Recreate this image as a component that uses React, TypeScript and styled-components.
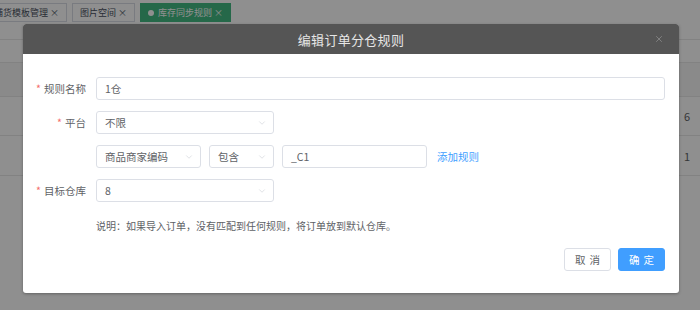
import React from 'react';
import styled, { createGlobalStyle } from 'styled-components';
import { X, ChevronDown } from 'lucide-react';

const GlobalStyle = createGlobalStyle`
  html, body {
    margin: 0;
    padding: 0;
    font-family: 'Noto Sans CJK SC', 'Liberation Sans', sans-serif;
  }
`;

/* ---------- page behind the dialog ---------- */

const Page = styled.div`
  position: relative;
  width: 700px;
  height: 310px;
  overflow: hidden;
  background: #ffffff;
`;

const TabBar = styled.div`
  display: flex;
  align-items: flex-start;
  gap: 5px;
  height: 27px;
  padding-top: 3px;
  margin-left: -14px;
  box-sizing: border-box;
`;

const Tab = styled.div<{ $active?: boolean }>`
  display: flex;
  align-items: center;
  gap: 4px;
  height: 19px;
  padding: 0 7px;
  box-sizing: border-box;
  border: 1px solid ${(p) => (p.$active ? '#42b983' : '#d8dce5')};
  background: ${(p) => (p.$active ? '#42b983' : '#ffffff')};
  color: ${(p) => (p.$active ? '#ffffff' : '#495060')};
  font-size: 9px;
  white-space: nowrap;
`;

const TabDot = styled.span`
  width: 6px;
  height: 6px;
  border-radius: 50%;
  background: #ffffff;
`;

const Table = styled.div`
  margin-top: 12px;
  border-top: 1px solid #e8e8e8;
`;

const Row = styled.div<{ $h: number; $head?: boolean }>`
  display: flex;
  justify-content: flex-end;
  align-items: center;
  height: ${(p) => p.$h}px;
  box-sizing: border-box;
  border-bottom: 1px solid #e8e8e8;
  background: ${(p) => (p.$head ? '#f7f7f7' : '#ffffff')};
  font-size: 11px;
  color: #606266;
`;

const NumCell = styled.span`
  width: 16px;
`;

/* ---------- dialog ---------- */

const Overlay = styled.div`
  position: absolute;
  inset: 0;
  background: rgba(0, 0, 0, 0.44);
  padding: 24px 0 0 23px;
  box-sizing: border-box;
`;

const Dialog = styled.div`
  width: 656px;
  background: #ffffff;
  border-radius: 3px;
  overflow: hidden;
  box-shadow: 0 1px 3px rgba(0, 0, 0, 0.3);
`;

const DialogHeader = styled.div`
  position: relative;
  display: flex;
  align-items: center;
  justify-content: center;
  height: 30px;
  background: #555555;
`;

const DialogTitle = styled.span`
  color: #e6e6e6;
  font-size: 13px;
  letter-spacing: 0.3px;
`;

const CloseButton = styled.span`
  position: absolute;
  right: 15px;
  top: 10px;
  display: flex;
  color: #a0a0a0;
`;

const DialogBody = styled.div`
  display: flex;
  flex-direction: column;
  gap: 11px;
  padding: 23px 14px 0 0;
`;

const FormItem = styled.div`
  display: flex;
  align-items: center;
`;

const Label = styled.label<{ $required?: boolean }>`
  width: 73px;
  padding-right: 10px;
  box-sizing: border-box;
  text-align: right;
  font-size: 10.5px;
  color: #606266;
  flex-shrink: 0;

  &::before {
    content: ${(p) => (p.$required ? "'*'" : "''")};
    color: #f56c6c;
    margin-right: 3px;
  }
`;

const Controls = styled.div`
  display: flex;
  align-items: center;
  gap: 8px;
  flex: 1;
`;

const Input = styled.div<{ $width?: number }>`
  display: flex;
  align-items: center;
  height: 23px;
  width: ${(p) => (p.$width ? `${p.$width}px` : 'auto')};
  flex: ${(p) => (p.$width ? '0 0 auto' : '1')};
  padding: 0 8px;
  box-sizing: border-box;
  border: 1px solid #dcdfe6;
  border-radius: 3px;
  font-size: 10.5px;
  color: #606266;
`;

const SelectBox = styled(Input)`
  justify-content: space-between;
  padding-right: 6px;
  color: #606266;
`;

const LinkText = styled.span`
  margin-left: 2px;
  font-size: 10.5px;
  color: #409eff;
`;

const Note = styled.div`
  margin: 17px 0 0 73px;
  font-size: 10px;
  line-height: 14px;
  color: #606266;
`;

const Footer = styled.div`
  display: flex;
  justify-content: flex-end;
  gap: 7px;
  padding: 15px 14px 22px 0;
`;

const Button = styled.button<{ $primary?: boolean }>`
  width: 47px;
  height: 23px;
  padding: 0;
  border-radius: 3px;
  border: 1px solid ${(p) => (p.$primary ? '#409eff' : '#dcdfe6')};
  background: ${(p) => (p.$primary ? '#409eff' : '#ffffff')};
  color: ${(p) => (p.$primary ? '#ffffff' : '#606266')};
  font-family: inherit;
  font-size: 10.5px;
  letter-spacing: 4px;
  text-indent: 4px;
`;

const Select: React.FC<{ value: string; width: number }> = ({ value, width }) => (
  <SelectBox $width={width}>
    <span>{value}</span>
    <ChevronDown size={10} strokeWidth={1.2} color="#c0c4cc" />
  </SelectBox>
);

export default function App() {
  return (
    <Page>
      <GlobalStyle />
      <TabBar>
        <Tab>铺货模板管理 ×</Tab>
        <Tab>图片空间 ×</Tab>
        <Tab $active>
          <TabDot />
          库存同步规则 ×
        </Tab>
      </TabBar>
      <Table>
        <Row $h={23} />
        <Row $h={34} $head />
        <Row $h={39}>
          <NumCell>6</NumCell>
        </Row>
        <Row $h={40}>
          <NumCell>1</NumCell>
        </Row>
      </Table>

      <Overlay>
        <Dialog>
          <DialogHeader>
            <DialogTitle>编辑订单分仓规则</DialogTitle>
            <CloseButton>
              <X size={10} strokeWidth={1.4} />
            </CloseButton>
          </DialogHeader>
          <DialogBody>
            <FormItem>
              <Label $required>规则名称</Label>
              <Controls>
                <Input>1仓</Input>
              </Controls>
            </FormItem>
            <FormItem>
              <Label $required>平台</Label>
              <Controls>
                <Select value="不限" width={178} />
              </Controls>
            </FormItem>
            <FormItem>
              <Label />
              <Controls>
                <Select value="商品商家编码" width={105} />
                <Select value="包含" width={65} />
                <Input $width={145}>_C1</Input>
                <LinkText>添加规则</LinkText>
              </Controls>
            </FormItem>
            <FormItem>
              <Label $required>目标仓库</Label>
              <Controls>
                <Select value="8" width={178} />
              </Controls>
            </FormItem>
          </DialogBody>
          <Note>说明：如果导入订单，没有匹配到任何规则，将订单放到默认仓库。</Note>
          <Footer>
            <Button>取消</Button>
            <Button $primary>确定</Button>
          </Footer>
        </Dialog>
      </Overlay>
    </Page>
  );
}
